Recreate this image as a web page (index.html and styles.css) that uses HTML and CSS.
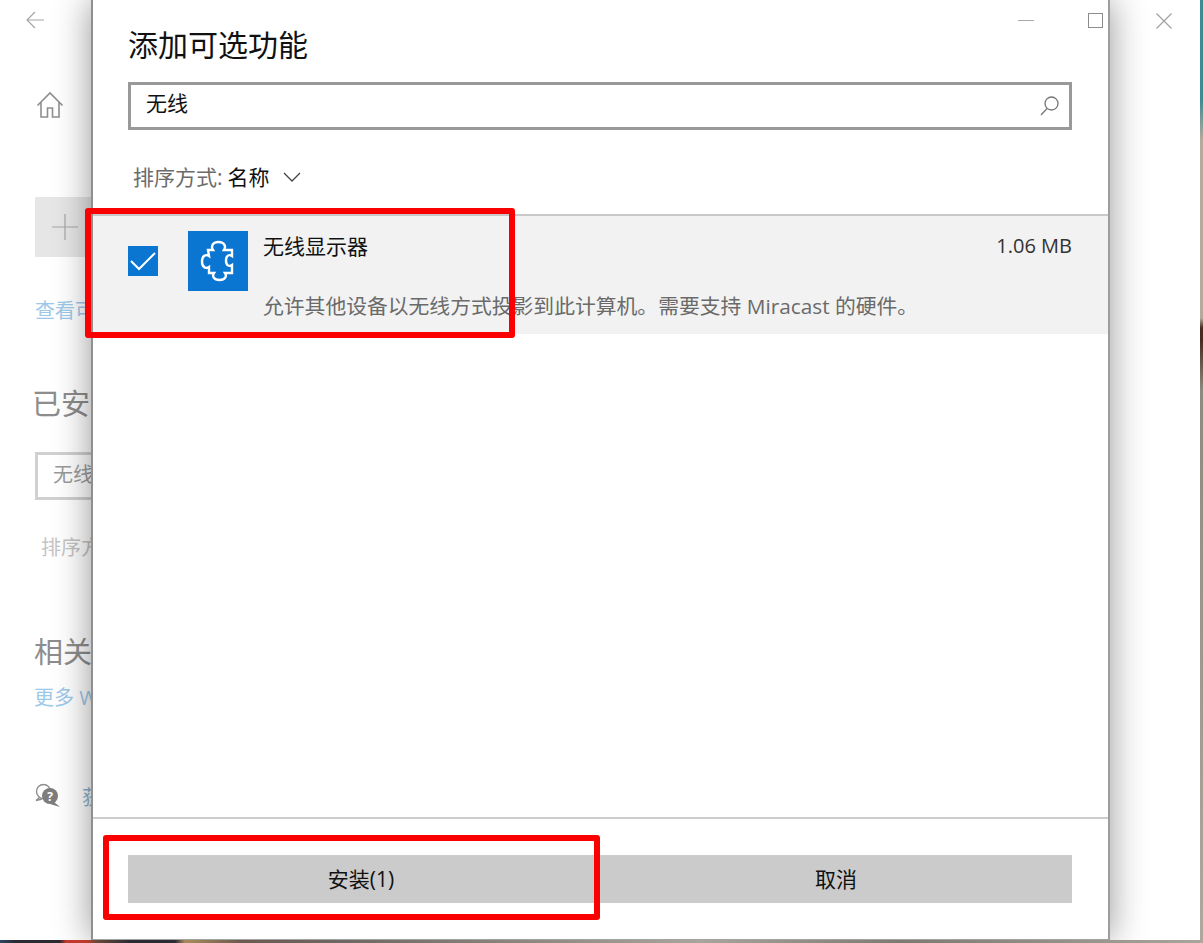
FILE: index.html
```html
<!DOCTYPE html>
<html lang="zh-CN">
<head>
<meta charset="utf-8">
<title>添加可选功能</title>
<link rel="stylesheet" href="styles.css">
</head>
<body>
<div class="window">
  <aside class="settings">
    <svg class="back" width="18" height="18" viewBox="0 0 18 18"><path d="M9 1 1 9l8 8M1 9h17"/></svg>
    <svg class="home" width="28" height="28" viewBox="0 0 28 28"><path d="M1.500 14.500 14 2l12.500 12.500M5 11.500V26h6.500v-9h5v9H23V11.500"/></svg>
    <div class="add-tile"><svg width="26" height="26" viewBox="0 0 26 26"><path d="M13 0v26M0 13h26"/></svg></div>
    <a class="link see">查看可选功能历史记录</a>
    <h2 class="bg-heading installed">已安装功能</h2>
    <div class="bg-search">无线</div>
    <div class="bg-sort">排序方式</div>
    <h2 class="bg-heading related">相关设置</h2>
    <a class="link more">更多 Windows 功能</a>
    <div class="help">
      <svg width="26" height="26" viewBox="0 0 26 26"><path class="bubble" d="m6 14-4 3.500 6-1.500"/><circle class="bubble" cx="9.500" cy="8.500" r="7"/><circle class="dot" cx="16" cy="13" r="8"/><path class="dot" d="m20 19 6 5-10-3z"/><text x="16" y="17.500" class="q">?</text></svg>
      <a class="link help-link">获取帮助</a>
    </div>
  </aside>

  <section class="dialog">
    <div class="caption">
      <span class="min"></span>
      <span class="max"></span>
    </div>
    <div class="dialog-main">
      <h1 class="title">添加可选功能</h1>
      <div class="search">
        <span>无线</span>
        <svg width="20" height="20" viewBox="0 0 20 20"><circle cx="11.500" cy="7.500" r="6.500"/><path d="M7 12.500 1 19"/></svg>
      </div>
      <div class="sort">
        <span class="sort-label">排序方式:</span>
        <span class="sort-value">名称</span>
        <svg width="18" height="10" viewBox="0 0 18 10"><path d="m1 1 8 8 8-8"/></svg>
      </div>
    </div>
    <div class="row">
      <span class="check"><svg width="30" height="30" viewBox="0 0 30 30"><path d="m3 15 8 8L27 7"/></svg></span>
      <span class="tile"><svg width="60" height="60" viewBox="0 0 60 60"><path d="M20 19h5c-2-3-1-8 5.500-8s7.500 5 5.500 8h8v6c-3-2-6-.5-6 4.500s3 6.500 6 4.500v8h-7c2 3 .5 7-5.500 7s-7.500-4-5.500-7h-5v-6c-3 2-7 .5-7-5.500s4-7.500 7-5.500z"/></svg></span>
      <div class="row-text">
        <div class="row-head">
          <span class="name">无线显示器</span>
          <span class="size">1.06 MB</span>
        </div>
        <p class="desc">允许其他设备以无线方式投影到此计算机。需要支持 Miracast 的硬件。</p>
      </div>
    </div>
    <div class="spacer"></div>
    <footer class="footer">
      <div class="btn install">安装(1)</div>
      <div class="btn">取消</div>
    </footer>
  </section>

  <svg class="close" width="16" height="16" viewBox="0 0 16 16"><path d="m.5.500 15 15M15.500.500l-15 15"/></svg>
  <div class="mark mark-row"></div>
  <div class="mark mark-btn"></div>
</div>
</body>
</html>
```
FILE: styles.css
```css
* { box-sizing: border-box; }
html, body { margin: 0; padding: 0; }
body {
  width: 1203px;
  height: 943px;
  overflow: hidden;
  font-family: "Open Sans", "Noto Sans CJK SC", sans-serif;
  background-color: #8f887e;
  background-image:
    linear-gradient(180deg, #3e8a92 0, #3e8a92 100px, #b5a99c 140px, #b5a99c 318px, #4a2a20 328px, #4a2a20 340px, #8c8a7c 390px, #b0a89c 943px),
    linear-gradient(90deg, #2c4a66 0, #2b2a30 15px, #2b2a30 60px, #c0392b 66px, #c0392b 88px, #6b4a3a 95px, #2a2c33 130px, #2a2c33 175px, #a98c5a 185px, #6d5a50 240px, #6d6660 330px, #a9a49c 700px, #7f7a70 900px, #a9a49c 1203px);
  background-size: 3px 943px, 1203px 3px;
  background-position: right top, left bottom;
  background-repeat: no-repeat;
}
.window {
  position: relative;
  width: 1200px;
  height: 940px;
  background: #fff;
  overflow: hidden;
}
.settings { width: 91px; height: 100%; overflow: hidden; position: absolute; left: 0; top: 0; }
.settings > * { position: absolute; }
.back { left: 26px; top: 11px; }
.back path, .home path, .close path, .add-tile path { fill: none; stroke: #a6a6a6; stroke-width: 1.200; }
.home { left: 36px; top: 91px; }
.home path { stroke: #8e8e8e; stroke-width: 1.600; }
.add-tile { left: 35px; top: 197px; width: 120px; height: 60px; background: #e6e6e6; padding: 17px 0 0 17px; }
.add-tile svg { display: block; }
.link { color: #9cc9ea; font-size: 20px; white-space: nowrap; line-height: 28px; }
.see { left: 35px; top: 297px; }
.more { left: 34px; top: 684px; }
.bg-heading { margin: 0; font-weight: 400; font-size: 29px; line-height: 40px; white-space: nowrap; color: #8d8d8d; }
.installed { left: 32px; top: 384px; }
.related { left: 34px; top: 632px; }
.bg-search { left: 35px; top: 452px; width: 300px; height: 48px; border: 3px solid #d0d0d0; padding-left: 15px; font-size: 20px; line-height: 40px; color: #9a9a9a; }
.bg-sort { left: 41px; top: 534px; font-size: 20px; line-height: 28px; color: #c4c4c4; white-space: nowrap; }
.help { left: 34px; top: 784px; display: flex; align-items: center; gap: 22px; }
.help svg { flex: none; position: relative; top: -2px; }
.bubble { fill: #fff; stroke: #8e8e8e; stroke-width: 1.400; }
.dot { fill: #7d7d7d; }
.q { fill: #fff; font-size: 12px; font-weight: 700; text-anchor: middle; }
.help-link { color: #8fb4d1; }

.dialog {
  position: absolute;
  left: 91px;
  top: 0;
  width: 1019px;
  height: 940px;
  display: flex;
  flex-direction: column;
  background: #fff;
  border-left: 2px solid #8f8f8f;
  border-right: 2px solid #9d9d9d;
  border-bottom: 1px solid #a3a3a3;
  box-shadow: 0 0 34px rgba(0, 0, 0, .42);
}
.caption { position: absolute; top: 0; right: 0; }
.min { position: absolute; right: 74px; top: 20px; width: 16px; height: 1px; background: #a8a8a8; }
.max { position: absolute; right: 5px; top: 13px; width: 15px; height: 15px; border: 1px solid #8c8c8c; }
.dialog-main { padding: 24px 36px 0 35px; height: 214px; flex: none; }
.title { margin: 0; font-size: 30px; font-weight: 400; line-height: 41px; color: #111; }
.search {
  margin-top: 17px;
  height: 48px;
  border: 3px solid #999;
  display: flex;
  align-items: center;
  justify-content: space-between;
  padding: 0 9px 0 15px;
  font-size: 21px;
  color: #111;
}
.search span { position: relative; top: -4px; }
.search svg { fill: none; stroke: #777; stroke-width: 1.300; }
.sort { margin-top: 32px; padding-left: 5px; display: flex; align-items: center; font-size: 21px; line-height: 30px; }
.sort-label { color: #6b6b6b; }
.sort-value { margin-left: 5px; color: #111; }
.sort svg { margin-left: 13px; fill: none; stroke: #444; stroke-width: 1.300; }
.row {
  flex: none;
  height: 120px;
  background: #f2f2f2;
  border-top: 2px solid #c8c8c8;
  padding: 15px 36px 0 35px;
  display: flex;
  align-items: flex-start;
  gap: 30px;
}
.check { margin-top: 15px; width: 30px; height: 30px; flex: none; background: #0b76d1; }
.check svg { display: block; fill: none; stroke: #fff; stroke-width: 2; }
.tile { width: 60px; height: 60px; flex: none; background: #0b76d1; margin-right: -15px; }
.tile svg { display: block; fill: none; stroke: #fff; stroke-width: 2.400; }
.row-text { flex: 1; min-width: 0; }
.row-head { display: flex; justify-content: space-between; align-items: center; height: 30px; margin-top: -1px; }
.name { font-size: 21px; color: #111; }
.size { font-size: 20px; color: #333; }
.desc { margin: 31px 0 0; font-size: 20.800px; line-height: 30px; color: #6a6a6a; white-space: nowrap; }
.spacer { flex: 1; }
.footer {
  flex: none;
  height: 122px;
  border-top: 2px solid #cdcdcd;
  padding: 36px 36px 0 35px;
  display: grid;
  grid-template-columns: 466px 1fr;
  column-gap: 6px;
  align-items: start;
}
.btn { height: 48px; background: #cbcbcb; color: #111; font-size: 21px; line-height: 48px; text-align: center; }
.close { position: absolute; left: 1156px; top: 13px; }
.close path { stroke: #a0a0a0; }
.mark { position: absolute; border: 6px solid #fb0000; border-radius: 3px; }
.mark-row { left: 85px; top: 208px; width: 430px; height: 130px; }
.mark-btn { left: 103px; top: 835px; width: 497px; height: 85px; }
```
